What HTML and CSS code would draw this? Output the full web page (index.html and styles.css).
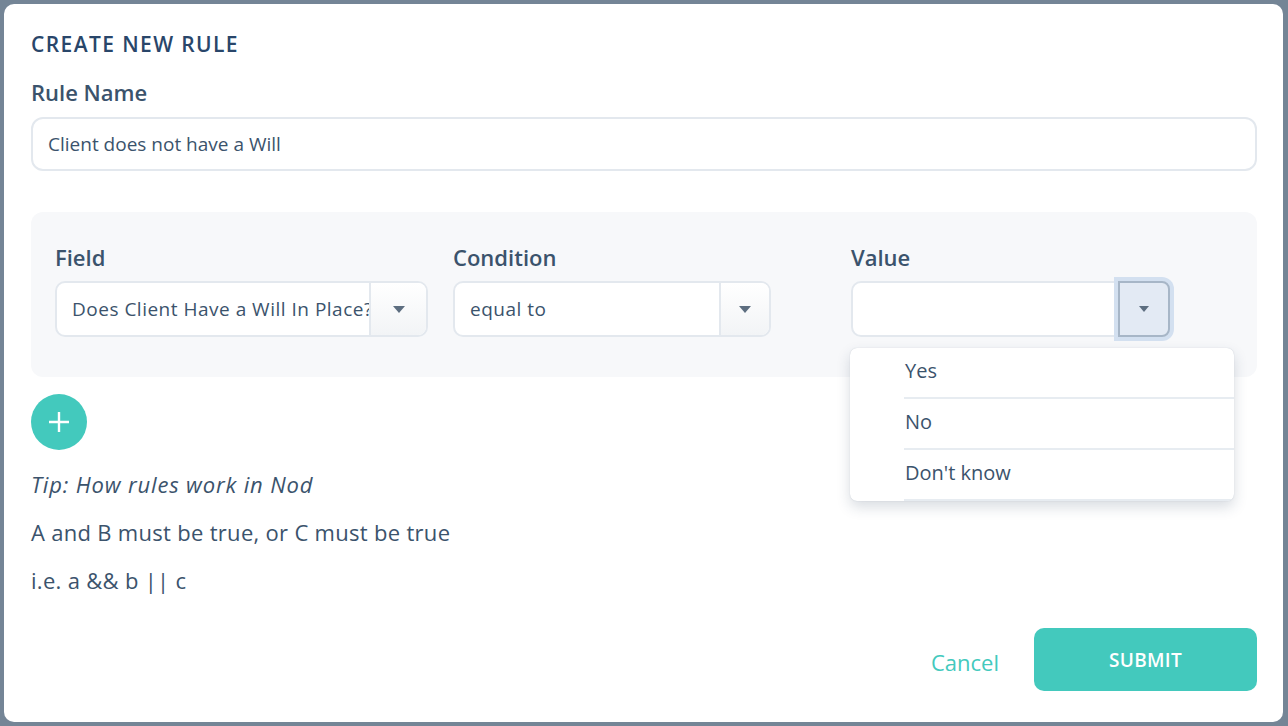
FILE: index.html
```html
<!DOCTYPE html>
<html lang="en">
<head>
  <meta charset="UTF-8" />
  <title>Create New Rule</title>
  <link rel="stylesheet" href="styles.css">
</head>
<body>
  <div class="modal">
    <h1 class="title">CREATE NEW RULE</h1>
    <label class="label">Rule Name</label>
    <div class="input">Client does not have a Will</div>

    <div class="panel">
      <div class="col">
        <div class="col-label">Field</div>
        <div class="select field-select">
          <span class="select-text">Does Client Have a Will In Place?</span>
          <span class="select-btn"><i class="caret"></i></span>
        </div>
      </div>
      <div class="col">
        <div class="col-label">Condition</div>
        <div class="select cond-select">
          <span class="select-text">equal to</span>
          <span class="select-btn"><i class="caret"></i></span>
        </div>
      </div>
      <div class="col">
        <div class="col-label">Value</div>
        <div class="select value-select">
          <span class="select-text"></span>
          <span class="select-btn focused"><i class="caret"></i></span>
          <ul class="menu">
            <li>Yes</li>
            <li>No</li>
            <li>Don't know</li>
          </ul>
        </div>
      </div>
    </div>

    <button class="add-btn">
      <svg width="24" height="24" viewBox="0 0 24 24"><path d="M12 2v20M2 12h20" stroke="#fff" stroke-width="2.4" fill="none"/></svg>
    </button>

    <p class="tip">Tip: How rules work in Nod</p>
    <p class="note">A and B must be true, or C must be true</p>
    <p class="note">i.e. a &amp;&amp; b || c</p>

    <div class="footer">
      <a href="#" class="cancel">Cancel</a>
      <button class="submit">SUBMIT</button>
    </div>
  </div>
</body>
</html>
```

FILE: styles.css
```css
:root {
  --teal: #43c9bd;
  --text: #3b536c;
  --title: #29466a;
  --border: #e3e8ee;
}

* {
  margin: 0;
  padding: 0;
  box-sizing: border-box;
}

body {
  background: #748596;
  font-family: "Open Sans", "Noto Sans", sans-serif;
  color: var(--text);
}

.modal {
  margin: 4px 5px 4px 4px;
  height: 718px;
  background: #fff;
  border-radius: 10px;
  padding: 28px 26px 0 27px;
  display: flex;
  flex-direction: column;
}

.title {
  font-size: 21px;
  line-height: 24px;
  font-weight: 600;
  color: var(--title);
  letter-spacing: 1.4px;
}

.label {
  display: block;
  margin-top: 23px;
  font-size: 22px;
  line-height: 26px;
  font-weight: 600;
}

.input {
  margin-top: 12px;
  height: 54px;
  border: 2px solid var(--border);
  border-radius: 12px;
  padding: 0 15px;
  display: flex;
  align-items: center;
  font-size: 19px;
}

.panel {
  margin-top: 41px;
  background: #f7f8fa;
  border-radius: 12px;
  padding: 32px 24px 40px;
  display: grid;
  grid-template-columns: 398px 398px 1fr;
}

.col-label {
  font-size: 22px;
  line-height: 26px;
  font-weight: 600;
  margin-bottom: 11px;
}

.select {
  position: relative;
  height: 56px;
  background: #fff;
  border: 2px solid var(--border);
  border-radius: 10px;
  display: flex;
}

.field-select { width: 373px; }
.cond-select { width: 318px; }
.value-select { width: 319px; }

.select-text {
  flex: 1;
  overflow: hidden;
  white-space: nowrap;
  padding-left: 15px;
  font-size: 19px;
  letter-spacing: 0.5px;
  line-height: 52px;
}

.select-btn {
  flex: none;
  width: 57px;
  border-left: 2px solid var(--border);
  border-radius: 0 8px 8px 0;
  background: linear-gradient(#fff, #f2f4f6);
  display: flex;
  align-items: center;
  justify-content: center;
}

.cond-select .select-btn { width: 50px; }

.caret {
  width: 0;
  height: 0;
  border-left: 6px solid transparent;
  border-right: 6px solid transparent;
  border-top: 7px solid #5d6e80;
}

.select-btn.focused {
  width: 52px;
  margin: -2px -2px -2px 0;
  background: #e3eaf4;
  border: 2px solid #a7b6c7;
  border-radius: 0 8px 8px 0;
  box-shadow: 0 0 0 4px #d3e0f0;
}

.select-btn.focused .caret {
  border-left-width: 5px;
  border-right-width: 5px;
  border-top-width: 6px;
}

.menu {
  position: absolute;
  top: 65px;
  left: -3px;
  width: 384px;
  background: #fff;
  border-radius: 7px;
  list-style: none;
  box-shadow: 0 6px 14px rgba(40, 60, 90, 0.18), 0 0 1px rgba(40, 60, 90, 0.25);
  z-index: 10;
  font-size: 20px;
  overflow: hidden;
}

.menu li {
  margin-left: 54px;
  padding-left: 1px;
  height: 51px;
  line-height: 45px;
  border-bottom: 2px solid #e7ecf1;
}

.add-btn {
  margin-top: 17px;
  width: 56px;
  height: 56px;
  border-radius: 50%;
  border: none;
  background: var(--teal);
  display: flex;
  align-items: center;
  justify-content: center;
  cursor: pointer;
}

.tip,
.note {
  font-size: 22px;
  line-height: 24px;
  letter-spacing: 0.3px;
}

.tip {
  margin-top: 22px;
  font-style: italic;
  letter-spacing: 0.85px;
}

.note {
  margin-top: 24px;
}

.footer {
  margin-top: 36px;
  display: flex;
  justify-content: flex-end;
  align-items: center;
  gap: 35px;
}

.cancel {
  color: var(--teal);
  text-decoration: none;
  font-size: 22px;
  margin-top: 4px;
}

.submit {
  width: 223px;
  height: 63px;
  border: none;
  border-radius: 10px;
  background: var(--teal);
  color: #fff;
  font-family: "Open Sans", "Noto Sans", sans-serif;
  font-size: 19px;
  font-weight: 600;
  letter-spacing: 0.3px;
  cursor: pointer;
}
```
